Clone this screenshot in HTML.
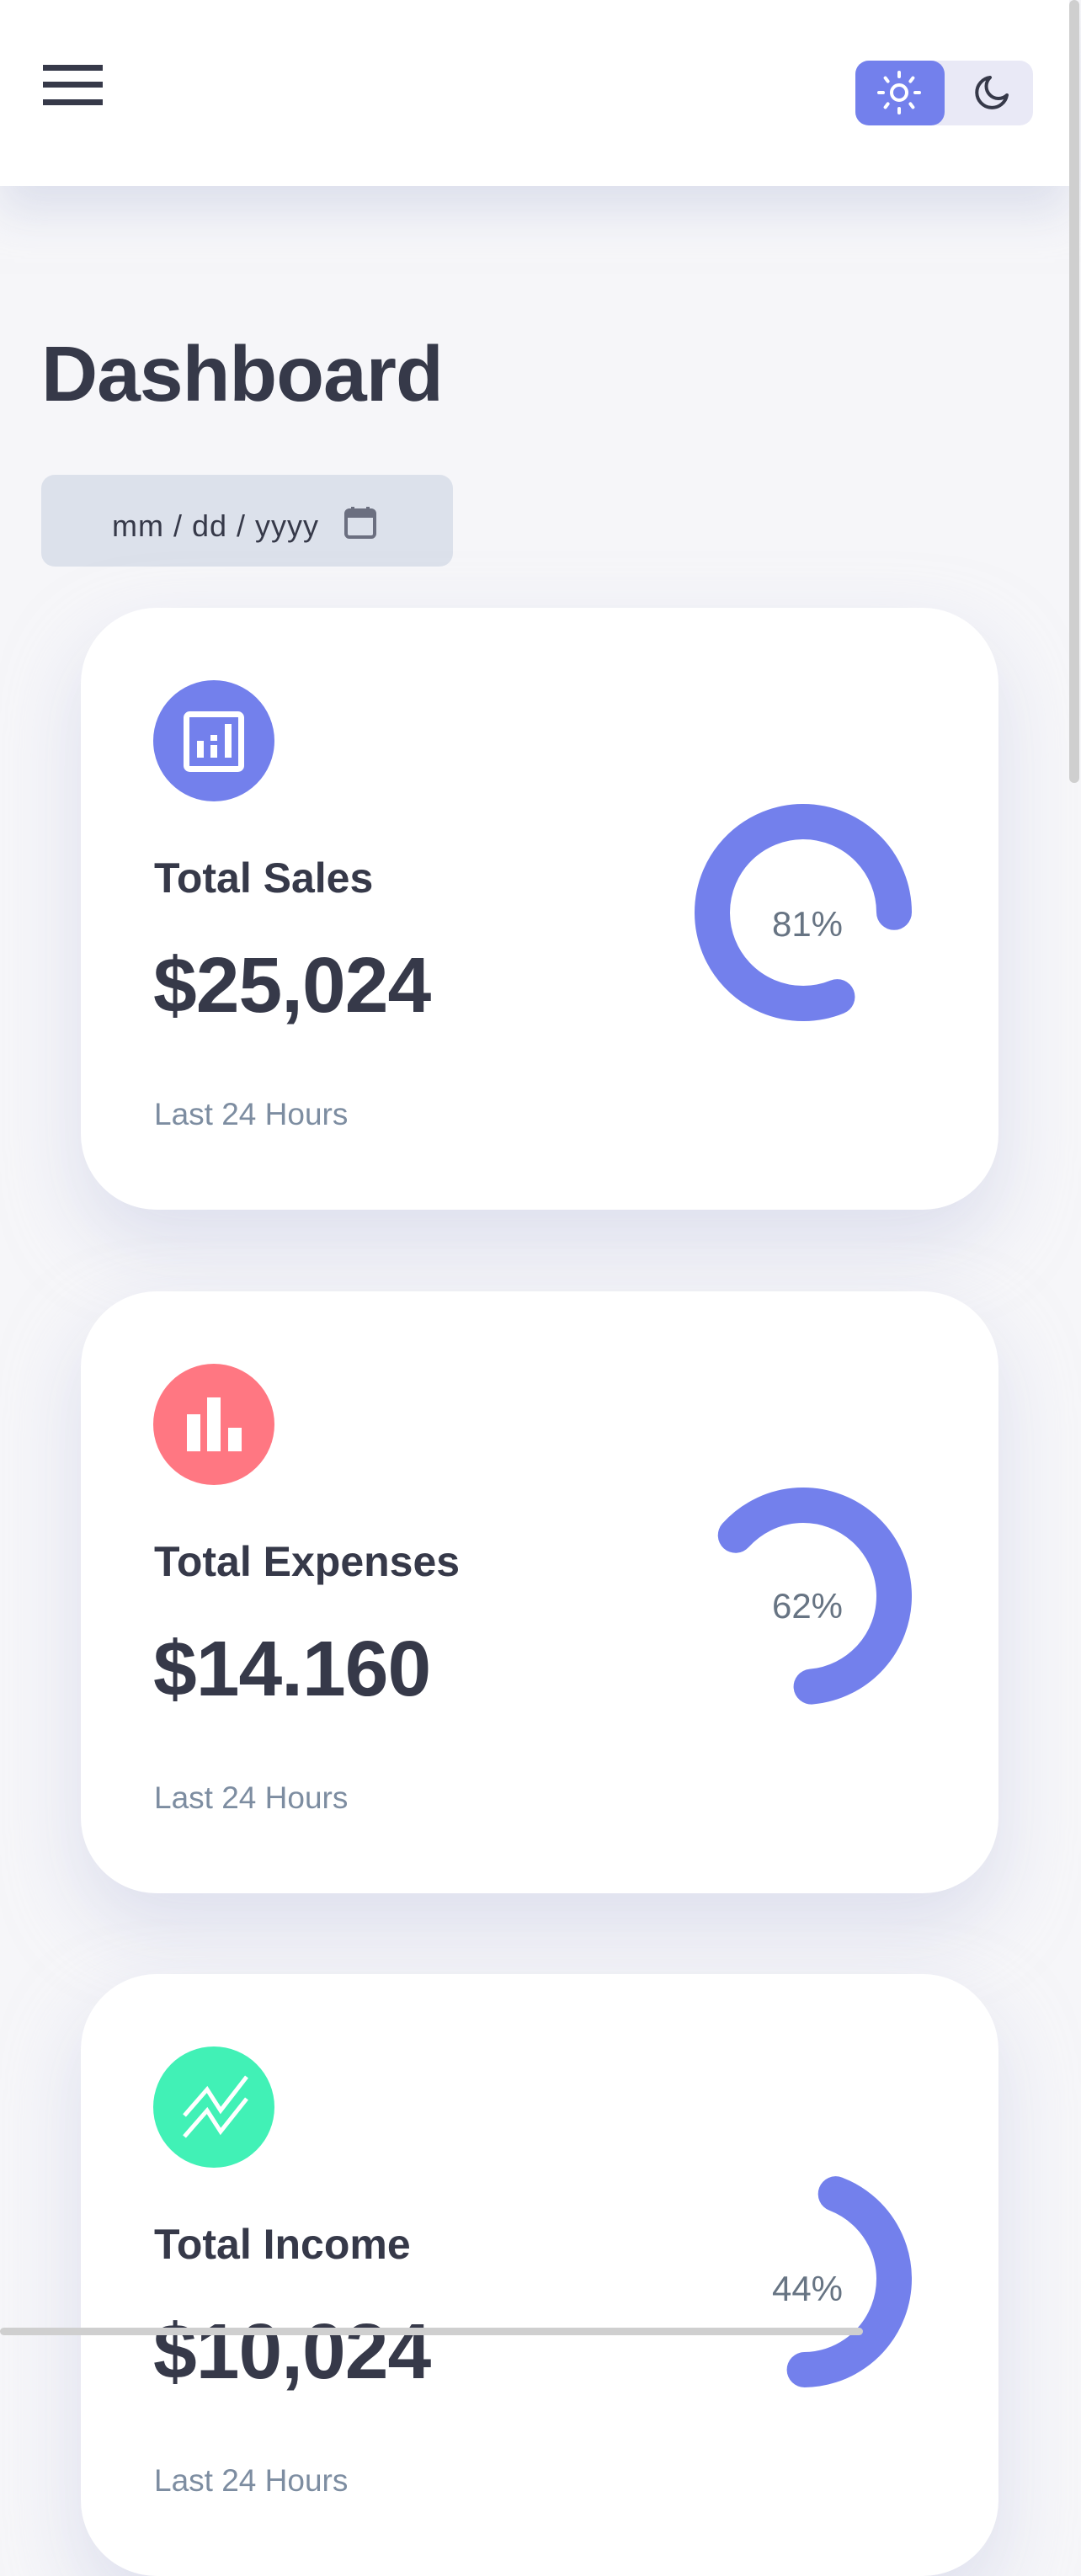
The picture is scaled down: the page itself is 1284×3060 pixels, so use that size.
<!DOCTYPE html>
<html><head><meta charset="utf-8">
<style>
*{margin:0;padding:0;box-sizing:border-box}
html,body{width:1284px;height:2781px;overflow:hidden;background:#f6f6f9;font-family:"Liberation Sans",sans-serif;color:#363949}
.hdr{position:absolute;left:0;top:0;width:1270px;height:221px;background:#fff;box-shadow:0 30px 50px rgba(200,205,225,.55);z-index:2}
.bar{position:absolute;left:51px;width:71px;height:7px;background:#363949}
.tog{position:absolute;left:1016px;top:72px;width:211px;height:77px;background:#e9e9f6;border-radius:16px}
.sun{position:absolute;left:0;top:0;width:106px;height:77px;background:#7380ec;border-radius:16px}
h1{position:absolute;left:49px;top:394px;font-size:93px;font-weight:bold;line-height:100px;letter-spacing:-1px}
.date{position:absolute;left:49px;top:564px;width:489px;height:109px;background:#dce1eb;border-radius:16px}
.date span{position:absolute;left:84px;top:42px;font-family:"Liberation Sans",sans-serif;font-size:36px;line-height:38px;color:#363949;letter-spacing:1px}
.card{position:absolute;left:96px;width:1090px;height:715px;background:#fff;border-radius:90px;box-shadow:0 40px 90px rgba(200,204,228,.55)}
.ic{position:absolute;left:86px;top:86px;width:144px;height:144px;border-radius:50%}
.t{position:absolute;left:87px;font-weight:bold;font-size:50px;line-height:50px}
.t1{top:296px}
.amt{position:absolute;left:86px;top:402px;font-weight:bold;font-size:93px;line-height:93px;letter-spacing:-1px}
.last{position:absolute;left:87px;top:582px;font-size:37px;line-height:40px;color:#7d8da1}
.pct{position:absolute;left:783px;width:160px;text-align:center;font-size:42px;line-height:42px;color:#677483}
svg.d{position:absolute;left:728px;top:232px;width:260px;height:260px}
.vs{position:absolute;left:1270px;top:0;width:12px;height:930px;background:#cfcfcf;border-radius:6px;z-index:5}
.hs{position:absolute;left:0;top:2765px;width:1025px;height:9px;background:#cfcfcf;border-radius:5px;z-index:5}
</style></head><body>
<div class="hdr">
 <div class="bar" style="top:77px"></div><div class="bar" style="top:97px"></div><div class="bar" style="top:118px"></div>
 <div class="tog"><div class="sun">
  <svg width="106" height="77" viewBox="0 0 106 77"><g transform="translate(52,38)" stroke="#fff" stroke-width="4" stroke-linecap="round" fill="none"><circle r="9"/><path d="M0-19v-5M0 19v5M-19 0h-5M19 0h5M-13.4-13.4l-3-4M13.4-13.4l3-4M-13.4 13.4l-3 4M13.4 13.4l3 4"/></g></svg>
 </div>
 <svg style="position:absolute;left:130px;top:14px" width="60" height="50" viewBox="0 0 60 50"><path d="M30 6a18 18 0 1 0 20 21a13 13 0 0 1-20-21z" fill="none" stroke="#363949" stroke-width="4" stroke-linejoin="round"/></svg>
 </div>
</div>
<div class="vs"></div>
<h1>Dashboard</h1>
<div class="date"><span>mm / dd / yyyy</span>
<svg style="position:absolute;left:359px;top:36px" width="40" height="40" viewBox="0 0 40 40"><rect x="3" y="6" width="34" height="32" rx="4" fill="none" stroke="#6b6f80" stroke-width="4"/><rect x="3" y="6" width="34" height="9" fill="#6b6f80"/><path d="M11 2v7M29 2v7" stroke="#6b6f80" stroke-width="4"/></svg></div>

<div class="card" style="top:722px">
 <div class="ic" style="background:#7380ec">
  <svg width="144" height="144" viewBox="0 0 144 144"><rect x="39.5" y="40.5" width="65" height="65" rx="4" fill="none" stroke="#fff" stroke-width="7"/><rect x="52" y="72" width="8" height="20" fill="#fff"/><rect x="68" y="65" width="8" height="7" fill="#fff"/><rect x="68" y="77" width="8" height="15" fill="#fff"/><rect x="85" y="52" width="8" height="40" fill="#fff"/></svg>
 </div>
 <div class="t t1">Total Sales</div>
 <div class="amt">$25,024</div>
 <div class="last">Last 24 Hours</div>
 <svg class="d" viewBox="0 0 260 260"><circle cx="130" cy="130" r="108" fill="none" stroke="#7380ec" stroke-width="42" stroke-linecap="round" stroke-dasharray="550 1000" transform="rotate(68 130 130)"/></svg>
 <div class="pct" style="top:355px">81%</div>
</div>

<div class="card" style="top:1534px">
 <div class="ic" style="background:#ff7782">
  <svg width="144" height="144" viewBox="0 0 144 144"><rect x="40" y="60" width="16" height="44" fill="#fff"/><rect x="64" y="40" width="16" height="64" fill="#fff"/><rect x="89" y="76" width="16" height="28" fill="#fff"/></svg>
 </div>
 <div class="t t1">Total Expenses</div>
 <div class="amt">$14.160</div>
 <div class="last">Last 24 Hours</div>
 <svg class="d" viewBox="0 0 260 260"><circle cx="130" cy="130" r="108" fill="none" stroke="#7380ec" stroke-width="42" stroke-linecap="round" stroke-dasharray="420 1000" transform="rotate(-138 130 130)"/></svg>
 <div class="pct" style="top:353px">62%</div>
</div>

<div class="card" style="top:2345px">
 <div class="ic" style="background:#41f1b6">
  <svg width="144" height="144" viewBox="0 0 144 144"><path d="M37 82L64 51L80 76L111 36M37 107L64 76L80 101L111 62" fill="none" stroke="#fff" stroke-width="5" stroke-linejoin="miter"/></svg>
 </div>
 <div class="t t1">Total Income</div>
 <div class="amt">$10,024</div>
 <div class="last">Last 24 Hours</div>
 <svg class="d" viewBox="0 0 260 260"><circle cx="130" cy="130" r="108" fill="none" stroke="#7380ec" stroke-width="42" stroke-linecap="round" stroke-dasharray="298 1000" transform="rotate(-69 130 130)"/></svg>
 <div class="pct" style="top:353px">44%</div>
</div>
<div class="hs"></div>
</body></html>
